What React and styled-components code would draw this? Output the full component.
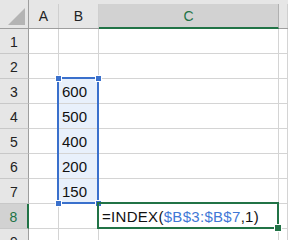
import React from "react";
import styled, { createGlobalStyle } from "styled-components";

const Global = createGlobalStyle`
  html, body { margin: 0; padding: 0; background: #fff; }
  body { font-family: "Liberation Sans", Arial, sans-serif; }
`;

const Sheet = styled.div`
  position: relative;
  width: 288px;
  height: 240px;
  overflow: hidden;
  background: #fff;
`;

const Row = styled.div`
  display: flex;
  height: ${(p) => p.$h}px;
`;

const Corner = styled.div`
  position: relative;
  box-sizing: border-box;
  width: 29px;
  flex: none;
  background: #e6e6e6;
  border-right: 1px solid #9e9e9e;
  border-bottom: 1px solid #9e9e9e;
`;

const Triangle = styled.div`
  position: absolute;
  left: 8px;
  top: 8px;
  width: 0;
  height: 0;
  border-left: 17px solid transparent;
  border-bottom: 17px solid #b4b4b4;
`;

const ColHead = styled.div`
  box-sizing: border-box;
  width: ${(p) => p.$w}px;
  flex: ${(p) => (p.$w ? "none" : "1")};
  background: #e6e6e6;
  border-bottom: 1px solid #9e9e9e;
  display: flex;
  flex-direction: column;
`;

const ColHeadInner = styled.div`
  flex: 1;
  margin-top: 4px;
  box-sizing: border-box;
  display: flex;
  align-items: center;
  justify-content: center;
  font-size: 14px;
  color: ${(p) => (p.$sel ? "#217346" : "#222")};
  background: ${(p) => (p.$sel ? "#d2d2d2" : "#e6e6e6")};
  border-right: 1px solid ${(p) => (p.$sel ? "#b0b0b0" : "#cfcfcf")};
  border-bottom: ${(p) => (p.$sel ? "2px solid #217346" : "0")};
  margin-bottom: ${(p) => (p.$sel ? "-1px" : "0")};
  padding-top: ${(p) => (p.$sel ? "1px" : "0")};
`;

const RowHead = styled.div`
  box-sizing: border-box;
  width: 29px;
  flex: none;
  display: flex;
  align-items: center;
  justify-content: center;
  font-size: 14px;
  color: ${(p) => (p.$sel ? "#217346" : "#222")};
  background: ${(p) => (p.$sel ? "#d2d2d2" : "#e6e6e6")};
  border-right: ${(p) => (p.$sel ? "2px solid #217346" : "1px solid #9e9e9e")};
  border-bottom: 1px solid #c8c8c8;
  padding-top: 1px;
`;

const Cell = styled.div`
  box-sizing: border-box;
  width: ${(p) => p.$w}px;
  flex: ${(p) => (p.$w ? "none" : "1")};
  border-right: 1px solid #d4d4d4;
  border-bottom: 1px solid #d4d4d4;
  background: ${(p) => (p.$hl ? "#e8f0fb" : "#fff")};
  display: flex;
  align-items: flex-end;
  padding: 0 0 3px 3px;
  font-size: 15px;
  letter-spacing: ${(p) => (p.$wide ? "0.3px" : "0")};
  color: #111;
  white-space: nowrap;
  overflow: visible;
`;

const Ref = styled.span`
  color: #3f78d6;
`;

const SelBox = styled.div`
  position: absolute;
  box-sizing: border-box;
  left: ${(p) => p.$x}px;
  top: ${(p) => p.$y}px;
  width: ${(p) => p.$w}px;
  height: ${(p) => p.$h}px;
  border: 2px solid ${(p) => p.$c};
  pointer-events: none;
`;

const Handle = styled.div`
  position: absolute;
  box-sizing: border-box;
  left: ${(p) => p.$x}px;
  top: ${(p) => p.$y}px;
  width: ${(p) => p.$s}px;
  height: ${(p) => p.$s}px;
  background: ${(p) => p.$c};
  outline: 1px solid #fff;
`;

const COLS = [30, 40, 180, 0];
const ROWH = 25;

export default function App() {
  const rows = [1, 2, 3, 4, 5, 6, 7, 8, 9];
  const data = { 3: "600", 4: "500", 5: "400", 6: "200", 7: "150" };
  return (
    <Sheet>
      <Global />
      <Row $h={29}>
        <Corner>
          <Triangle />
        </Corner>
        <ColHead $w={30}>
          <ColHeadInner>A</ColHeadInner>
        </ColHead>
        <ColHead $w={40}>
          <ColHeadInner>B</ColHeadInner>
        </ColHead>
        <ColHead $w={180}>
          <ColHeadInner $sel>C</ColHeadInner>
        </ColHead>
        <ColHead>
          <ColHeadInner />
        </ColHead>
      </Row>
      {rows.map((r) => (
        <Row key={r} $h={ROWH}>
          <RowHead $sel={r === 8}>{r}</RowHead>
          <Cell $w={COLS[0]} />
          <Cell $w={COLS[1]} $hl={!!data[r]}>
            {data[r] || ""}
          </Cell>
          <Cell $w={COLS[2]} $wide={r === 8}>
            {r === 8 ? (
              <>
                =INDEX(<Ref>$B$3:$B$7</Ref>,1)
              </>
            ) : null}
          </Cell>
          <Cell />
        </Row>
      ))}
      <SelBox $x={57} $y={77} $w={42} $h={127} $c="#3a70cc" />
      <Handle $x={56} $y={76} $s={5} $c="#3a70cc" />
      <Handle $x={96} $y={76} $s={5} $c="#3a70cc" />
      <Handle $x={56} $y={201} $s={5} $c="#3a70cc" />
      <Handle $x={96} $y={201} $s={5} $c="#3a70cc" />
      <SelBox $x={97} $y={202} $w={182} $h={27} $c="#217346" />
      <Handle $x={275} $y={225} $s={6} $c="#217346" />
    </Sheet>
  );
}
